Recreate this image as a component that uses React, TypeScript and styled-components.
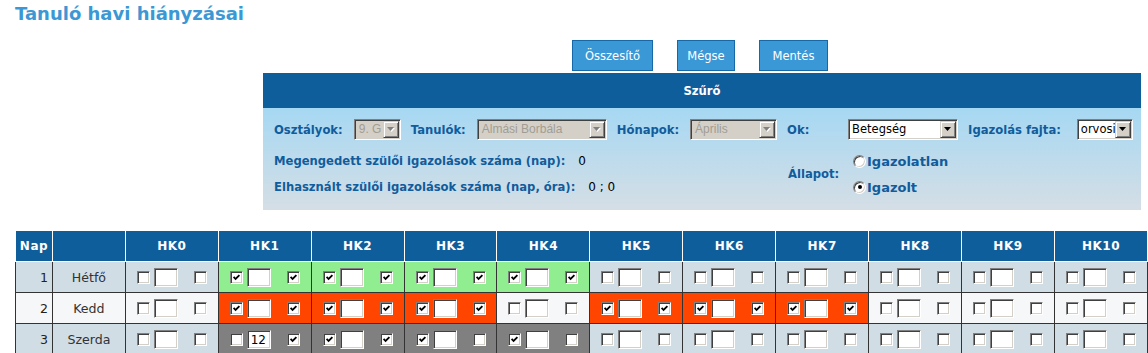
import React from 'react'
import styled, { createGlobalStyle } from 'styled-components'

const GlobalStyle = createGlobalStyle`
  html, body {
    margin: 0;
    padding: 0;
    background: #fff;
    overflow: hidden;
  }
  body {
    font-family: 'DejaVu Sans', Verdana, sans-serif;
  }
`

type Slot = { bg?: string; a?: boolean; b?: boolean; v?: string }

const GREEN = '#90ee90'
const RED = '#ff4500'
const GRAY = '#808080'

const both = (bg: string): Slot => ({ bg, a: true, b: true })

const rows: { nap: number; name: string; base: string; slots: Record<number, Slot> }[] = [
  {
    nap: 1,
    name: 'Hétfő',
    base: '#d1dde5',
    slots: { 1: both(GREEN), 2: both(GREEN), 3: both(GREEN), 4: both(GREEN) },
  },
  {
    nap: 2,
    name: 'Kedd',
    base: '#f5f7f9',
    slots: { 1: both(RED), 2: both(RED), 3: both(RED), 5: both(RED), 6: both(RED), 7: both(RED) },
  },
  {
    nap: 3,
    name: 'Szerda',
    base: '#d1dde5',
    slots: {
      1: { bg: GRAY, b: true, v: '12' },
      2: both(GRAY),
      3: { bg: GRAY, a: true },
      4: { bg: GRAY, a: true },
    },
  },
]

const hours = Array.from({ length: 11 }, (_, i) => i)

const CheckMark = () => (
  <svg width="9" height="9" viewBox="0 0 9 9">
    <path d="M1.6 3.8 L3.6 6 L7.4 2.2" fill="none" stroke="#000" strokeWidth="1.8" />
  </svg>
)

const Arrow = ({ disabled }: { disabled?: boolean }) => (
  <svg width="8" height="5" viewBox="0 0 8 5">
    {disabled && <polygon points="1,1 8,1 4.5,5" fill="#fff" />}
    <polygon points="0,0 7,0 3.5,4" fill={disabled ? '#808080' : '#000'} />
  </svg>
)

const Select = ({ width, value, disabled }: { width: number; value: string; disabled?: boolean }) => (
  <SelectBox $w={width} $disabled={disabled}>
    <SelectText $disabled={disabled}>{value}</SelectText>
    <DropButton>
      <Arrow disabled={disabled} />
    </DropButton>
  </SelectBox>
)

const App = () => {
  return (
    <Page>
      <GlobalStyle />
      <Title>Tanuló havi hiányzásai</Title>

      <ButtonRow>
        <Button $w={81}>Összesítő</Button>
        <Button $w={58}>Mégse</Button>
        <Button $w={69}>Mentés</Button>
      </ButtonRow>

      <Panel>
        <PanelHeader>Szűrő</PanelHeader>
        <PanelBody>
          <FilterRow>
            <Field>
              <Label>Osztályok:</Label>
              <Select width={47} value="9. G" disabled />
            </Field>
            <Field>
              <Label>Tanulók:</Label>
              <Select width={130} value="Almási Borbála" disabled />
            </Field>
            <Field>
              <Label>Hónapok:</Label>
              <Select width={87} value="Április" disabled />
            </Field>
            <Field $gap={0}>
              <Label $w={61}>Ok:</Label>
              <Select width={110} value="Betegség" />
            </Field>
            <Field $gap={16}>
              <Label>Igazolás fajta:</Label>
              <Select width={56} value="orvosi" />
            </Field>
          </FilterRow>

          <InfoArea>
            <InfoColumn>
              <InfoLine>
                <Label>Megengedett szülői igazolások száma (nap):</Label>
                <Value>0</Value>
              </InfoLine>
              <InfoLine>
                <Label>Elhasznált szülői igazolások száma (nap, óra):</Label>
                <Value>0 ; 0</Value>
              </InfoLine>
            </InfoColumn>
            <StatusGroup>
              <Label $w={61}>Állapot:</Label>
              <RadioList>
                <RadioOption>
                  <Radio />
                  <RadioLabel>Igazolatlan</RadioLabel>
                </RadioOption>
                <RadioOption>
                  <Radio $checked />
                  <RadioLabel>Igazolt</RadioLabel>
                </RadioOption>
              </RadioList>
            </StatusGroup>
          </InfoArea>
        </PanelBody>
      </Panel>

      <Grid>
        <thead>
          <tr>
            <HeadCell $w={36}>Nap</HeadCell>
            <HeadCell $w={72} />
            {hours.map((h) => (
              <HeadCell key={h} $w={92}>
                HK{h}
              </HeadCell>
            ))}
          </tr>
        </thead>
        <tbody>
          {rows.map((row) => (
            <tr key={row.nap}>
              <NumCell $bg={row.base}>{row.nap}</NumCell>
              <NameCell $bg={row.base}>{row.name}</NameCell>
              {hours.map((h) => {
                const slot = row.slots[h] || {}
                return (
                  <Cell key={h} $bg={slot.bg || row.base}>
                    <SlotBox>
                      <Check>{slot.a && <CheckMark />}</Check>
                      <TextBox>{slot.v}</TextBox>
                      <Check>{slot.b && <CheckMark />}</Check>
                    </SlotBox>
                  </Cell>
                )
              })}
            </tr>
          ))}
        </tbody>
      </Grid>
    </Page>
  )
}

const Page = styled.div`
  width: 1148px;
  height: 353px;
  overflow: hidden;
`

const Title = styled.h1`
  margin: 0;
  padding: 3px 0 0 15px;
  height: 22px;
  font-size: 18px;
  line-height: 22px;
  font-weight: bold;
  color: #3b98d4;
`

const ButtonRow = styled.div`
  margin: 15px 0 0 263px;
  width: 878px;
  padding-right: 4px;
  box-sizing: border-box;
  display: flex;
  justify-content: center;
  gap: 24px;
`

const Button = styled.div<{ $w: number }>`
  width: ${(p) => p.$w}px;
  height: 31px;
  box-sizing: border-box;
  border: 1px solid #1768a6;
  background: #3a98d6;
  color: #fff;
  font-size: 11.5px;
  display: flex;
  align-items: center;
  justify-content: center;
`

const Panel = styled.div`
  margin: 2px 0 0 263px;
  width: 878px;
`

const PanelHeader = styled.div`
  height: 35px;
  background: #0f5e9c;
  color: #fff;
  font-size: 11.6px;
  font-weight: bold;
  display: flex;
  align-items: center;
  justify-content: center;
`

const PanelBody = styled.div`
  height: 102px;
  box-sizing: border-box;
  padding: 11px 11px 0;
  background: linear-gradient(#a6d8f3, #d5dee5);
`

const FilterRow = styled.div`
  display: flex;
  align-items: center;
  height: 21px;
  gap: 10px;
`

const Field = styled.div<{ $gap?: number }>`
  display: flex;
  align-items: center;
  gap: ${(p) => (p.$gap ?? 11)}px;
`

const Label = styled.span<{ $w?: number }>`
  font-size: 11.6px;
  font-weight: bold;
  color: #105c9c;
  white-space: nowrap;
  ${(p) => (p.$w ? `width: ${p.$w}px; flex: none;` : '')}
`

const SelectBox = styled.div<{ $w: number; $disabled?: boolean }>`
  width: ${(p) => p.$w}px;
  height: 21px;
  box-sizing: border-box;
  display: flex;
  padding: 1px;
  border: 1px solid;
  border-color: #808080 #fff #fff #808080;
  box-shadow: inset 1px 1px #404040, inset -1px -1px #d4d0c8;
  background: ${(p) => (p.$disabled ? '#d4d0c8' : '#fff')};
`

const SelectText = styled.span<{ $disabled?: boolean }>`
  flex: 1;
  overflow: hidden;
  white-space: nowrap;
  padding-left: ${(p) => (p.$disabled ? 3 : 2)}px;
  font-family: ${(p) => (p.$disabled ? "'Liberation Sans', Arial, sans-serif" : "'DejaVu Sans', Verdana, sans-serif")};
  font-size: ${(p) => (p.$disabled ? 12 : 11.5)}px;
  line-height: 17px;
  color: ${(p) => (p.$disabled ? '#a19d95' : '#000')};
`

const DropButton = styled.span`
  width: 16px;
  height: 17px;
  box-sizing: border-box;
  flex: none;
  display: flex;
  align-items: center;
  justify-content: center;
  background: #d4d0c8;
  border: 1px solid;
  border-color: #d4d0c8 #404040 #404040 #d4d0c8;
  box-shadow: inset 1px 1px #fff, inset -1px -1px #808080;
`

const InfoArea = styled.div`
  display: flex;
  margin-top: 8px;
`

const InfoColumn = styled.div`
  width: 514px;
  display: flex;
  flex-direction: column;
`

const InfoLine = styled.div`
  height: 26px;
  display: flex;
  align-items: center;
  gap: 13px;
`

const Value = styled.span`
  font-size: 12px;
  color: #000;
  white-space: pre;
`

const StatusGroup = styled.div`
  display: flex;
  align-items: center;
`

const RadioList = styled.div`
  display: flex;
  flex-direction: column;
  margin-left: 4px;
`

const RadioOption = styled.div`
  height: 26px;
  display: flex;
  align-items: center;
  gap: 1px;
`

const Radio = styled.span<{ $checked?: boolean }>`
  width: 13px;
  height: 13px;
  box-sizing: border-box;
  border-radius: 50%;
  border: 1px solid;
  border-color: #808080 #fff #fff #808080;
  box-shadow: inset 1px 1px #404040, inset -1px -1px #d4d0c8;
  background: #fff;
  display: inline-flex;
  align-items: center;
  justify-content: center;
  &::after {
    content: '';
    width: 4px;
    height: 4px;
    border-radius: 50%;
    background: ${(p) => (p.$checked ? '#000' : 'transparent')};
  }
`

const RadioLabel = styled.span`
  font-size: 13px;
  font-weight: bold;
  color: #105c9c;
`

const Grid = styled.table`
  margin: 20px 0 0 15px;
  border-collapse: collapse;
  table-layout: fixed;
`

const HeadCell = styled.th<{ $w: number }>`
  width: ${(p) => p.$w}px;
  height: 30px;
  padding: 0;
  border: 1px solid #fff;
  background: #0f5e9c;
  color: #fff;
  font-size: 12px;
  font-weight: bold;
  letter-spacing: 0.5px;
  text-align: center;
`

const Cell = styled.td<{ $bg: string }>`
  height: 30px;
  padding: 0;
  border: 1px solid #333;
  background: ${(p) => p.$bg};
`

const NumCell = styled(Cell)`
  text-align: right;
  padding-right: 4px;
  font-size: 12.6px;
  color: #222;
`

const NameCell = styled(Cell)`
  text-align: center;
  font-size: 12.6px;
  color: #333;
`

const SlotBox = styled.div`
  display: flex;
  align-items: center;
  justify-content: center;
`

const Check = styled.span`
  width: 13px;
  height: 13px;
  box-sizing: border-box;
  flex: none;
  display: inline-flex;
  align-items: center;
  justify-content: center;
  border: 1px solid;
  border-color: #808080 #fff #fff #808080;
  box-shadow: inset 1px 1px #404040, inset -1px -1px #d4d0c8;
  background: #fff;
`

const TextBox = styled.span`
  width: 24px;
  height: 19px;
  box-sizing: border-box;
  flex: none;
  margin: 0 16px 0 4px;
  padding: 2px 0 0 3px;
  border: 1px solid;
  border-color: #808080 #fff #fff #808080;
  box-shadow: inset 1px 1px #404040, inset -1px -1px #d4d0c8;
  background: #fff;
  font-size: 12px;
  line-height: 14px;
  color: #000;
`

export default App
